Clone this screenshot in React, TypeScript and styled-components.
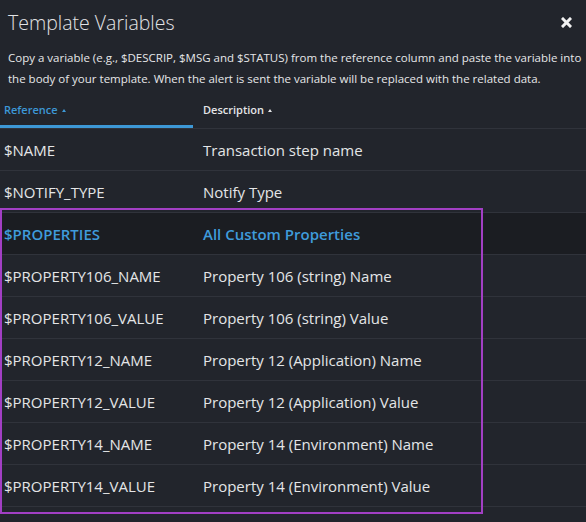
import React from "react";
import styled, { createGlobalStyle } from "styled-components";

const Global = createGlobalStyle`
  html, body { margin: 0; padding: 0; background: #22252c; }
  body { font-family: "Open Sans", "Noto Sans", sans-serif; color: #e4e5e7; }
  * { box-sizing: border-box; }
`;

const Dialog = styled.div`
  position: relative;
  width: 586px;
  height: 522px;
  background: #22252c;
  overflow: hidden;
`;

const TitleBar = styled.div`
  height: 45px;
  display: flex;
  align-items: center;
  justify-content: space-between;
  padding: 0 14px 0 8px;
`;

const Title = styled.h1`
  margin: 0;
  font-size: 19.5px;
  font-weight: 300;
  color: #e2e3e6;
`;

const CloseButton = styled.button`
  border: 0;
  background: none;
  padding: 0;
  width: 12px;
  height: 12px;
  display: flex;
  align-items: center;
  justify-content: center;
  cursor: pointer;
`;

const Intro = styled.p`
  margin: 2px 0 0;
  padding: 0 0 0 8px;
  font-size: 11.5px;
  line-height: 21px;
  color: #e6e7e9;
  white-space: nowrap;
`;

const Table = styled.div`
  margin-top: 8px;
  display: flex;
  flex-direction: column;
`;

const HeaderRow = styled.div`
  display: grid;
  grid-template-columns: 199px 1fr;
  height: 32px;
  border-bottom: 1px solid #30333b;
`;

const HeaderCell = styled.div<{ $active?: boolean }>`
  position: relative;
  display: flex;
  align-items: center;
  gap: 4px;
  padding: 0 4px 6px;
  font-size: 11px;
  font-weight: 600;
  color: ${(p) => (p.$active ? "#3d98d6" : "#e4e5e7")};
  &::after {
    content: "";
    display: ${(p) => (p.$active ? "block" : "none")};
    position: absolute;
    left: 0;
    bottom: 0;
    width: 193px;
    height: 3px;
    background: #3d98d6;
  }
`;

const SortArrow = styled.span`
  width: 0;
  height: 0;
  border-left: 2.5px solid transparent;
  border-right: 2.5px solid transparent;
  border-bottom: 3px solid currentColor;
  margin-top: 2px;
`;

const Row = styled.div<{ $highlight?: boolean }>`
  display: grid;
  grid-template-columns: 199px 1fr;
  height: 42px;
  align-items: center;
  border-bottom: 1px solid #30333b;
  background: ${(p) => (p.$highlight ? "#1b1d22" : "transparent")};
  font-size: 15px;
  font-weight: ${(p) => (p.$highlight ? 600 : 400)};
  color: ${(p) => (p.$highlight ? "#3f9bdb" : "#e4e5e7")};
`;

const Cell = styled.div`
  padding: 0 4px;
  white-space: nowrap;
`;

const Annotation = styled.div`
  position: absolute;
  left: 0;
  top: 208px;
  width: 483px;
  height: 306px;
  border: 2px solid #a23fc4;
  pointer-events: none;
`;

const rows: { ref: string; desc: string; highlight?: boolean }[] = [
  { ref: "$NAME", desc: "Transaction step name" },
  { ref: "$NOTIFY_TYPE", desc: "Notify Type" },
  { ref: "$PROPERTIES", desc: "All Custom Properties", highlight: true },
  { ref: "$PROPERTY106_NAME", desc: "Property 106 (string) Name" },
  { ref: "$PROPERTY106_VALUE", desc: "Property 106 (string) Value" },
  { ref: "$PROPERTY12_NAME", desc: "Property 12 (Application) Name" },
  { ref: "$PROPERTY12_VALUE", desc: "Property 12 (Application) Value" },
  { ref: "$PROPERTY14_NAME", desc: "Property 14 (Environment) Name" },
  { ref: "$PROPERTY14_VALUE", desc: "Property 14 (Environment) Value" },
];

export default function App() {
  return (
    <>
      <Global />
      <Dialog>
        <TitleBar>
          <Title>Template Variables</Title>
          <CloseButton aria-label="Close">
            <svg width="11" height="11" viewBox="0 0 11 11">
              <path d="M2 2 L9 9 M9 2 L2 9" stroke="#f2f2f2" strokeWidth="3" strokeLinecap="square" />
            </svg>
          </CloseButton>
        </TitleBar>
        <Intro>
          Copy a variable (e.g., $DESCRIP, $MSG and $STATUS) from the reference column and paste the variable into
          <br />
          the body of your template. When the alert is sent the variable will be replaced with the related data.
        </Intro>
        <Table>
          <HeaderRow>
            <HeaderCell $active>
              Reference <SortArrow />
            </HeaderCell>
            <HeaderCell>
              Description <SortArrow />
            </HeaderCell>
          </HeaderRow>
          {rows.map((r) => (
            <Row key={r.ref} $highlight={r.highlight}>
              <Cell>{r.ref}</Cell>
              <Cell>{r.desc}</Cell>
            </Row>
          ))}
        </Table>
        <Annotation />
      </Dialog>
    </>
  );
}
